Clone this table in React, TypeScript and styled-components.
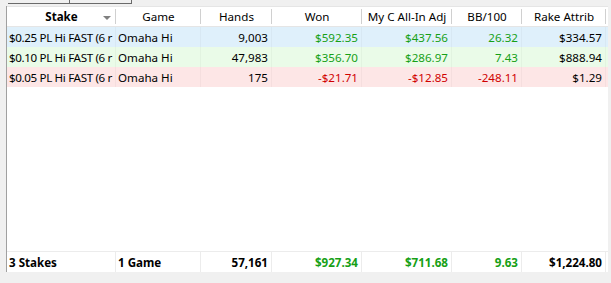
import React from "react";
import styled, { createGlobalStyle } from "styled-components";

const GlobalStyle = createGlobalStyle`
	html, body {
		margin: 0;
		padding: 0;
		background: #f0f0f0;
	}
	body {
		font-family: "Noto Sans", "Open Sans", sans-serif;
		font-size: 11.6px;
		color: #000;
	}
`;

const COLS = "109px 85px 71px 90px 90px 70px 84px";

type Tone = "blue" | "green" | "red";
type Ink = "plain" | "green" | "red";

const toneBg: Record<Tone, string> = {
	blue: "#dff0fb",
	green: "#eafbe8",
	red: "#fde6e6",
};

const inkColor: Record<Ink, string> = {
	plain: "#000",
	green: "#16a016",
	red: "#d00000",
};

const Page = styled.div`
	width: 611px;
	height: 283px;
	display: flex;
	flex-direction: column;
	overflow: hidden;
`;

const TabStrip = styled.div`
	height: 6px;
	display: flex;
	padding-left: 8px;
`;

const Tab = styled.div`
	width: 61px;
	height: 3px;
	border-bottom: 1px solid #6a6a6a;
	border-right: 1px solid #6a6a6a;
`;

const Panel = styled.div`
	margin-left: 6px;
	width: 601px;
	height: 266px;
	background: #fff;
	border-left: 1px solid #a0a0a0;
	display: flex;
	flex-direction: column;
`;

const Row = styled.div<{ $tone?: Tone }>`
	display: grid;
	grid-template-columns: ${COLS};
	height: 20px;
	background: ${(p) => (p.$tone ? toneBg[p.$tone] : "#fff")};
`;

const HeaderRow = styled(Row)`
	height: 21px;
	border-top: 1px solid #e5e5e5;
	border-bottom: 1px solid #e5e5e5;
	box-sizing: border-box;
	background: #fff;
`;

const HeadCell = styled.div<{ $bold?: boolean }>`
	position: relative;
	display: flex;
	align-items: center;
	justify-content: center;
	font-weight: ${(p) => (p.$bold ? 700 : 400)};
	color: #000;
	white-space: nowrap;
	overflow: hidden;

	&::after {
		content: "";
		position: absolute;
		right: 0;
		top: 2px;
		bottom: 2px;
		width: 1px;
		background: #d0d0d0;
	}
`;

const SortArrow = styled.span`
	position: absolute;
	right: 5px;
	top: 9px;
	width: 0;
	height: 0;
	border-left: 4px solid transparent;
	border-right: 4px solid transparent;
	border-top: 4px solid #808080;
`;

const Cell = styled.div<{ $right?: boolean; $ink?: Ink; $bold?: boolean; $tight?: boolean }>`
	display: flex;
	align-items: center;
	justify-content: ${(p) => (p.$right ? "flex-end" : "flex-start")};
	padding: ${(p) => (p.$right ? "0 3px 0 0" : "0 0 0 2px")};
	color: ${(p) => inkColor[p.$ink || "plain"]};
	font-weight: ${(p) => (p.$bold ? 700 : 400)};
	letter-spacing: ${(p) => (p.$tight ? "-0.35px" : "normal")};
	white-space: nowrap;
	overflow: hidden;
	border-right: 1px solid rgba(0, 0, 0, 0.03);
`;

const FootCell = styled(Cell)`
	border-right: 1px solid #ececec;
`;

const Spacer = styled.div`
	flex: 1;
`;

const FooterRow = styled(Row)`
	height: 21px;
	border-top: 1px solid #ececec;
	box-sizing: border-box;
`;

interface StakeRow {
	stake: string;
	game: string;
	hands: string;
	won: string;
	adj: string;
	bb: string;
	rake: string;
	tone: Tone;
	ink: Ink;
}

// stake names are cut by the column in the grid, keep what shows
const rows: StakeRow[] = [
	{ stake: "$0.25 PL Hi FAST (6 r", game: "Omaha Hi", hands: "9,003", won: "$592.35", adj: "$437.56", bb: "26.32", rake: "$334.57", tone: "blue", ink: "green" },
	{ stake: "$0.10 PL Hi FAST (6 r", game: "Omaha Hi", hands: "47,983", won: "$356.70", adj: "$286.97", bb: "7.43", rake: "$888.94", tone: "green", ink: "green" },
	{ stake: "$0.05 PL Hi FAST (6 r", game: "Omaha Hi", hands: "175", won: "-$21.71", adj: "-$12.85", bb: "-248.11", rake: "$1.29", tone: "red", ink: "red" },
];

export default function App() {
	return (
		<>
			<GlobalStyle />
			<Page>
				<TabStrip>
					<Tab />
					<Tab />
				</TabStrip>
				<Panel>
					<HeaderRow>
						<HeadCell $bold>
							Stake
							<SortArrow />
						</HeadCell>
						<HeadCell>Game</HeadCell>
						<HeadCell>Hands</HeadCell>
						<HeadCell>Won</HeadCell>
						<HeadCell>My C All-In Adj</HeadCell>
						<HeadCell>BB/100</HeadCell>
						<HeadCell>Rake Attrib</HeadCell>
					</HeaderRow>
					{rows.map((r, i) => (
						<Row key={i} $tone={r.tone}>
							<Cell $tight>{r.stake}</Cell>
							<Cell>{r.game}</Cell>
							<Cell $right>{r.hands}</Cell>
							<Cell $right $ink={r.ink}>{r.won}</Cell>
							<Cell $right $ink={r.ink}>{r.adj}</Cell>
							<Cell $right $ink={r.ink}>{r.bb}</Cell>
							<Cell $right>{r.rake}</Cell>
						</Row>
					))}
					<Spacer />
					<FooterRow>
						<FootCell $bold>3 Stakes</FootCell>
						<FootCell $bold>1 Game</FootCell>
						<FootCell $bold $right>57,161</FootCell>
						<FootCell $bold $right $ink="green">$927.34</FootCell>
						<FootCell $bold $right $ink="green">$711.68</FootCell>
						<FootCell $bold $right $ink="green">9.63</FootCell>
						<FootCell $bold $right>$1,224.80</FootCell>
					</FooterRow>
				</Panel>
			</Page>
		</>
	);
}
